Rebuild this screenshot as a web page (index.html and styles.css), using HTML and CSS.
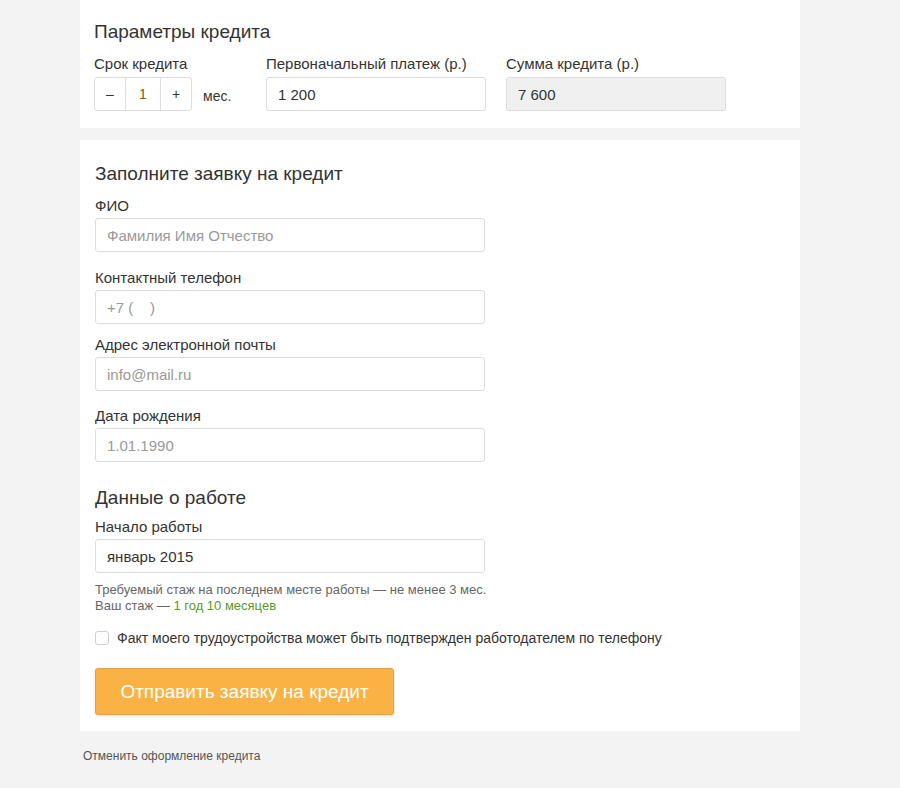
FILE: index.html
```html
<!DOCTYPE html>
<html lang="ru">
<head>
<meta charset="utf-8">
<title>Кредит</title>
<link rel="stylesheet" href="styles.css">
</head>
<body>
<div class="wrap">
  <section class="panel panel-params">
    <h2 class="title">Параметры кредита</h2>
    <div class="params">
      <div class="param">
        <div class="label">Срок кредита</div>
        <div class="term">
          <div class="stepper">
            <span class="step-btn">–</span>
            <span class="step-val">1</span>
            <span class="step-btn">+</span>
          </div>
          <span class="unit">мес.</span>
        </div>
      </div>
      <div class="param">
        <div class="label">Первоначальный платеж (р.)</div>
        <div class="input">1 200</div>
      </div>
      <div class="param">
        <div class="label">Сумма кредита (р.)</div>
        <div class="input input-disabled">7 600</div>
      </div>
    </div>
  </section>

  <section class="panel panel-form">
    <h2 class="title">Заполните заявку на кредит</h2>
    <div class="field">
      <div class="label">ФИО</div>
      <div class="input placeholder">Фамилия Имя Отчество</div>
    </div>
    <div class="field field-tight">
      <div class="label">Контактный телефон</div>
      <div class="input placeholder">+7 (&nbsp;&nbsp;&nbsp;&nbsp;)</div>
    </div>
    <div class="field field-mid">
      <div class="label">Адрес электронной почты</div>
      <div class="input placeholder">info@mail.ru</div>
    </div>
    <div class="field field-last">
      <div class="label">Дата рождения</div>
      <div class="input placeholder">1.01.1990</div>
    </div>

    <h2 class="title title-work">Данные о работе</h2>
    <div class="field field-last">
      <div class="label">Начало работы</div>
      <div class="input">январь 2015</div>
    </div>
    <p class="hint">Требуемый стаж на последнем месте работы — не менее 3 мес.<br>Ваш стаж — <span class="ok">1 год 10 месяцев</span></p>

    <label class="check">
      <span class="box"></span>
      <span>Факт моего трудоустройства может быть подтвержден работодателем по телефону</span>
    </label>

    <button class="submit" type="button">Отправить заявку на кредит</button>
  </section>

  <a class="cancel" href="#">Отменить оформление кредита</a>
</div>
</body>
</html>
```

FILE: styles.css
```css
* { box-sizing: border-box; }
html, body { margin: 0; padding: 0; }
body {
  background: #f3f3f3;
  font-family: "Liberation Sans", Arial, sans-serif;
  color: #333;
  height: 788px;
}
.wrap {
  width: 720px;
  margin-left: 80px;
}
.panel {
  background: #fff;
  padding: 0 15px;
}
.panel-params {
  padding: 21px 14px 17px;
}
.panel-form {
  margin-top: 12px;
  padding-top: 23px;
  padding-bottom: 16px;
}
.title {
  margin: 0;
  font-size: 19px;
  line-height: 22px;
  font-weight: normal;
  color: #333;
}
.panel-params .title { margin-bottom: 12px; }
.panel-form .title { margin-bottom: 12px; }
.panel-form .title-work { margin-top: 25px; margin-bottom: 9px; }

.params {
  display: grid;
  grid-template-columns: 152px 220px 220px;
  column-gap: 20px;
}
.label {
  font-size: 15px;
  line-height: 18px;
  margin-bottom: 3px;
  color: #333;
}
.params .label { margin-bottom: 4px; }
.term {
  display: flex;
  align-items: center;
}
.stepper {
  display: flex;
  height: 34px;
  border: 1px solid #dcdcdc;
  border-radius: 3px;
}
.step-btn, .step-val {
  display: flex;
  align-items: center;
  justify-content: center;
  font-size: 14px;
}
.step-btn { width: 30px; color: #333; }
.step-val {
  width: 36px;
  border-left: 1px solid #dcdcdc;
  border-right: 1px solid #dcdcdc;
  color: #7d6000;
}
.unit {
  margin-left: 11px;
  font-size: 14px;
  color: #333;
  padding-top: 3px;
}
.input {
  height: 34px;
  border: 1px solid #dcdcdc;
  border-radius: 3px;
  padding: 0 11px;
  display: flex;
  align-items: center;
  font-size: 15px;
  color: #333;
  background: #fff;
}
.input-disabled { background: #f0f0f0; }
.placeholder { color: #999; }

.field { width: 390px; margin-bottom: 17px; }
.field-tight { margin-bottom: 12px; }
.field-mid { margin-bottom: 16px; }
.field-last { margin-bottom: 0; }

.hint {
  margin: 9px 0 0;
  font-size: 13px;
  line-height: 16px;
  color: #666;
}
.ok { color: #5a9a2a; }

.check {
  display: flex;
  align-items: center;
  margin-top: 15px;
  font-size: 14px;
  line-height: 18px;
  color: #333;
}
.box {
  width: 14px;
  height: 14px;
  border: 1px solid #cfcfcf;
  border-radius: 3px;
  margin-right: 8px;
  background: #fff;
}
.submit {
  display: block;
  margin-top: 21px;
  width: 299px;
  height: 47px;
  background: #fbb244;
  border: 1px solid #eaa035;
  border-radius: 3px;
  box-shadow: 0 1px 3px rgba(0,0,0,0.15);
  color: #fff;
  font-family: "Liberation Sans", Arial, sans-serif;
  font-size: 19px;
  padding: 0;
  cursor: pointer;
}
.cancel {
  display: block;
  margin: 17px 0 0 3px;
  font-size: 12px;
  line-height: 16px;
  color: #555;
  text-decoration: none;
}
```
